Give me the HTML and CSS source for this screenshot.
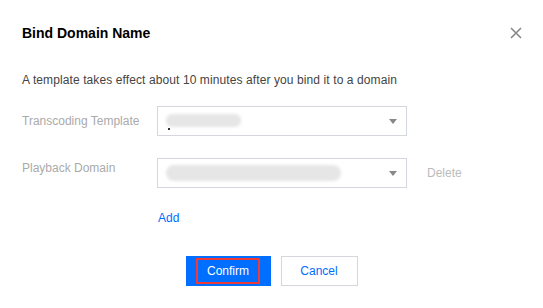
FILE: index.html
```html
<!DOCTYPE html>
<html lang="en">

<head>
    <title>Bind Domain Name</title>
    <link rel="stylesheet" href="styles.css">
</head>

<body>

    <div id="dialog">

        <div class="dialog-header">
            <h2>Bind Domain Name</h2>
            <span class="close-btn">
                <svg width="12" height="12" viewBox="0 0 12 12"><path d="M1 1L11 11M11 1L1 11" stroke="#888" stroke-width="1.6"/></svg>
            </span>
        </div>

        <p class="desc">A template takes effect about 10 minutes after you bind it to a domain</p>

        <div class="form-row first">
            <label class="form-label">Transcoding Template</label>
            <div class="select">
                <span class="blur short"></span>
                <span class="dot"></span>
                <span class="arrow"></span>
            </div>
        </div>

        <div class="form-row second">
            <label class="form-label">Playback Domain</label>
            <div class="select">
                <span class="blur long"></span>
                <span class="arrow"></span>
            </div>
            <a class="delete-link">Delete</a>
        </div>

        <div class="add-row">
            <a class="add-link">Add</a>
        </div>

        <div class="footer">
            <button class="btn primary"><span class="outline">Confirm</span></button>
            <button class="btn">Cancel</button>
        </div>

    </div>

</body>
</html>
```

FILE: styles.css
```css
body {
    font-family: 'Liberation Sans', Arial, sans-serif;
    background-color: #fff;
    margin: 0;
    padding: 0;
}

#dialog {
    width: 543px;
    height: 308px;
    padding: 23px 22px 0;
    box-sizing: border-box;
}

.dialog-header {
    display: flex;
    justify-content: space-between;
    align-items: center;
    height: 20px;
}

h2 {
    margin: 0;
    font-size: 14px;
    font-weight: bold;
    color: #000;
    line-height: 20px;
}

.close-btn {
    display: flex;
    margin-right: -1px;
}

.desc {
    margin: 27px 0 0;
    font-size: 12px;
    letter-spacing: 0.1px;
    line-height: 20px;
    color: #444;
}

.form-row {
    display: flex;
    align-items: flex-start;
}

.form-row.first {
    margin-top: 16px;
}

.form-row.second {
    margin-top: 22px;
}

.form-label {
    width: 135px;
    font-size: 12px;
    color: #aaa;
    line-height: 30px;
}

.second .form-label {
    line-height: 20px;
}

.select {
    position: relative;
    width: 250px;
    height: 30px;
    border: 1px solid #d4d8de;
    box-sizing: border-box;
}

.blur {
    position: absolute;
    top: 7px;
    left: 8px;
    height: 13px;
    background-color: #e6e6e6;
    border-radius: 6px;
    filter: blur(1.5px);
}

.blur.short {
    width: 75px;
}

.blur.long {
    top: 6px;
    width: 175px;
    height: 16px;
    border-radius: 8px;
}

.dot {
    position: absolute;
    left: 10px;
    top: 21px;
    width: 2px;
    height: 2px;
    background-color: #333;
}

.arrow {
    position: absolute;
    right: 9px;
    top: 12px;
    border-left: 4px solid transparent;
    border-right: 4px solid transparent;
    border-top: 5px solid #888;
}

.delete-link {
    margin-left: 20px;
    font-size: 12px;
    line-height: 30px;
    color: #bbb;
}

.add-row {
    margin-top: 20px;
    padding-left: 136px;
}

.add-link {
    font-size: 12px;
    line-height: 20px;
    color: #006eff;
}

.footer {
    display: flex;
    justify-content: center;
    gap: 10px;
    margin-top: 28px;
}

.btn {
    height: 30px;
    width: 77px;
    padding: 0;
    font-family: inherit;
    font-size: 12px;
    color: #006eff;
    background-color: #fff;
    border: 1px solid #d4d8de;
    box-sizing: border-box;
    cursor: pointer;
}

.btn.primary {
    width: 85px;
    color: #fff;
    background-color: #006eff;
    border-color: #006eff;
    display: flex;
    align-items: center;
    justify-content: center;
}

.outline {
    display: block;
    width: 64px;
    height: 26px;
    line-height: 22px;
    border: 2px solid #ef3a3a;
    box-sizing: border-box;
}
```
